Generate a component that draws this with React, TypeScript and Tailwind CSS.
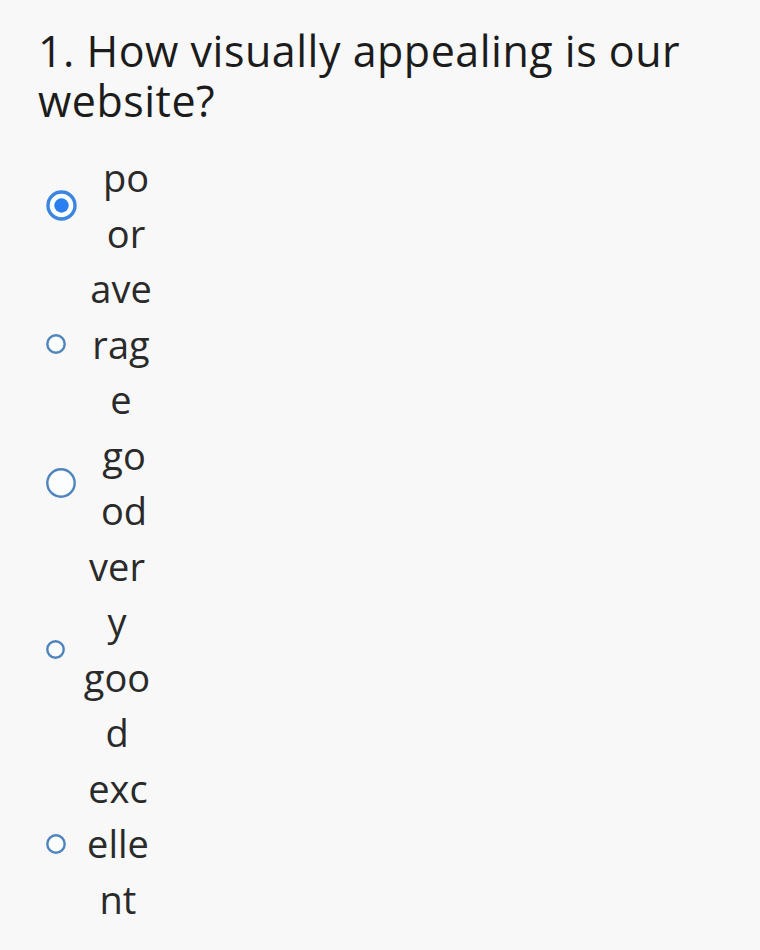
import React from 'react';

type Option = {
  value: string;
  lines: string[];
  size: number;
  dot?: boolean;
  gap: string;
};

// each label wraps letter by letter inside a very narrow column
const options: Option[] = [
  { value: 'poor', lines: ['po', 'or'], size: 31, dot: true, gap: 'ml-[13px]' },
  { value: 'average', lines: ['ave', 'rag', 'e'], size: 20, gap: 'ml-[19px]' },
  { value: 'good', lines: ['go', 'od'], size: 30, gap: 'ml-[12px]' },
  { value: 'very good', lines: ['ver', 'y', 'goo', 'd'], size: 19, gap: 'ml-[16px]' },
  { value: 'excellent', lines: ['exc', 'elle', 'nt'], size: 20, gap: 'ml-[16px]' },
];

function Radio({ size, checked }: { size: number; checked?: boolean }) {
  const r = size / 2;
  return (
    <svg width={size} height={size} viewBox={`0 0 ${size} ${size}`} className="shrink-0">
      <circle
        cx={r}
        cy={r}
        r={r - (checked ? 2 : 1.3)}
        fill="#fbfdff"
        stroke={checked ? '#3a86e0' : '#4f84bd'}
        strokeWidth={checked ? 3.4 : 2.4}
      />
      {checked && <circle cx={r} cy={r} r={7.2} fill="#2a7ff0" />}
    </svg>
  );
}

export default function App() {
  return (
    <div className="min-h-screen w-full bg-[#f8f8f8] font-['Open_Sans',sans-serif] text-[#1c1c1c]">
      <div className="pl-[38px] pt-[26px]">
        <h1 className="text-[43px] leading-[50px] font-normal tracking-[0.5px]">
          1. How visually appealing is our
          <br />
          website?
        </h1>

        <div className="mt-[24px] flex flex-col pl-[8px] text-[38px] leading-[55.5px] text-[#2a2a2a]">
          {options.map((o) => (
            <label key={o.value} className="flex items-center">
              <Radio size={o.size} checked={o.dot} />
              <span className={`${o.gap} flex w-[72px] flex-col items-center`}>
                {o.lines.map((l, i) => (
                  <span key={i}>{l}</span>
                ))}
              </span>
            </label>
          ))}
        </div>
      </div>
    </div>
  );
}
